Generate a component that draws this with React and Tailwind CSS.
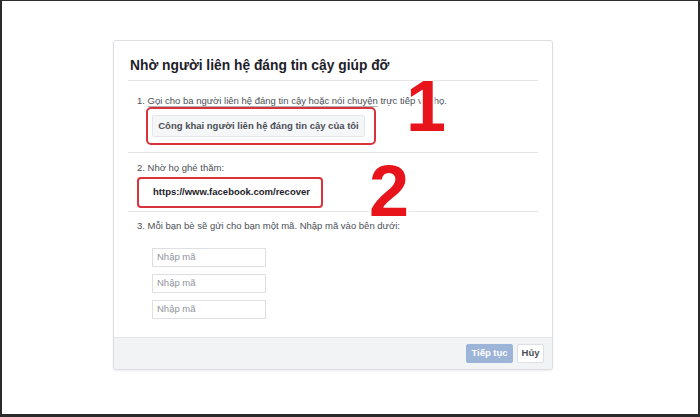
export default function App() {
  const font = { fontFamily: '"Liberation Sans", Arial, sans-serif' };
  return (
    <div
      className="w-[700px] h-[417px] bg-white border-t border-l-2 border-r-2 border-b-[3px] border-[#2b2b2b] pl-[111px] pt-[39px]"
      style={font}
    >
      <div className="relative w-[440px] h-[330px] bg-white border border-[#dcdee3] rounded-[3px] shadow-[0_1px_2px_rgba(0,0,0,0.08)] flex flex-col overflow-hidden">
        {/* header */}
        <div className="mx-[14px] pt-[17px] pb-[6px] border-b border-[#e5e5e5]">
          <div className="pl-[2px] text-[13.8px] leading-[16px] font-bold text-[#1d2129] whitespace-nowrap">
            Nhờ người liên hệ đáng tin cậy giúp đỡ
          </div>
        </div>

        {/* section 1 */}
        <div className="mx-[14px] pl-[9px] pt-[14px] pb-[7px] border-b border-[#e5e5e5]">
          <div className="text-[9.5px] leading-[12px] text-[#4b4f56] whitespace-nowrap">
            1.{" "}
            <span className="underline decoration-[#b0b2b6] underline-offset-2">
              Gọi cho ba người liên hệ đáng tin cậy hoặc nói chuyện
            </span>{" "}
            trực tiếp với họ.
          </div>
          <div className="ml-[9px] w-[230px] h-[38px] border-2 border-[#d8323a] rounded-[5px] pl-[4px] flex items-center">
            <button className="w-[213px] h-[22px] bg-[#f5f6f7] border border-[#e4e6eb] rounded-[2px] text-[9.5px] font-bold text-[#4b4f56] whitespace-nowrap flex items-center justify-center">
              Công khai người liên hệ đáng tin cậy của tôi
            </button>
          </div>
        </div>

        {/* section 2 */}
        <div className="mx-[14px] pl-[9px] pt-[9px] pb-[3px] border-b border-[#e5e5e5]">
          <div className="text-[9.5px] leading-[12px] text-[#4b4f56]">2. Nhờ họ ghé thăm:</div>
          <div className="mt-[3px] w-[186px] h-[31px] border-2 border-[#d8323a] rounded-[4px] pl-[14px] flex items-center">
            <span className="text-[9.5px] font-bold text-[#1d2129] whitespace-nowrap">https://www.facebook.com/recover</span>
          </div>
        </div>

        {/* section 3 */}
        <div className="flex-1 mx-[14px] pl-[9px] pt-[8px]">
          <div className="text-[9.5px] leading-[12px] text-[#4b4f56] whitespace-nowrap">
            3. Mỗi bạn bè sẽ gửi cho bạn một mã. Nhập mã vào bên dưới:
          </div>
          <div className="mt-[16px] ml-[15px] flex flex-col gap-[7px]">
            {[0, 1, 2].map((i) => (
              <div
                key={i}
                className="w-[114px] h-[19px] border border-[#dddfe2] bg-white pl-[4px] flex items-center text-[9.5px] text-[#90949c]"
              >
                Nhập mã
              </div>
            ))}
          </div>
        </div>

        {/* footer */}
        <div className="h-[32px] bg-[#f2f3f5] border-t border-[#e5e5e5] flex items-center justify-end gap-[4px] pr-[8px]">
          <button className="w-[47px] h-[19px] bg-[#9cb4d8] border border-[#9cb4d8] rounded-[2px] text-[9.5px] font-bold text-white flex items-center justify-center whitespace-nowrap">
            Tiếp tục
          </button>
          <button className="w-[27px] h-[19px] bg-white border border-[#dddfe2] rounded-[2px] text-[9.5px] font-bold text-[#4b4f56] flex items-center justify-center">
            Hủy
          </button>
        </div>

        {/* annotation numbers */}
        <span className="absolute left-[292px] top-[29px] text-[72px] leading-none font-bold text-[#e8141b] [text-shadow:0_0_2px_#fff,0_0_3px_#fff,2px_0_2px_#fff,-2px_0_2px_#fff]">
          1
        </span>
        <span className="absolute left-[255px] top-[114px] text-[72px] leading-none font-bold text-[#e8141b] [text-shadow:0_0_2px_#fff,0_0_3px_#fff,2px_0_2px_#fff,-2px_0_2px_#fff]">
          2
        </span>
      </div>
    </div>
  );
}
